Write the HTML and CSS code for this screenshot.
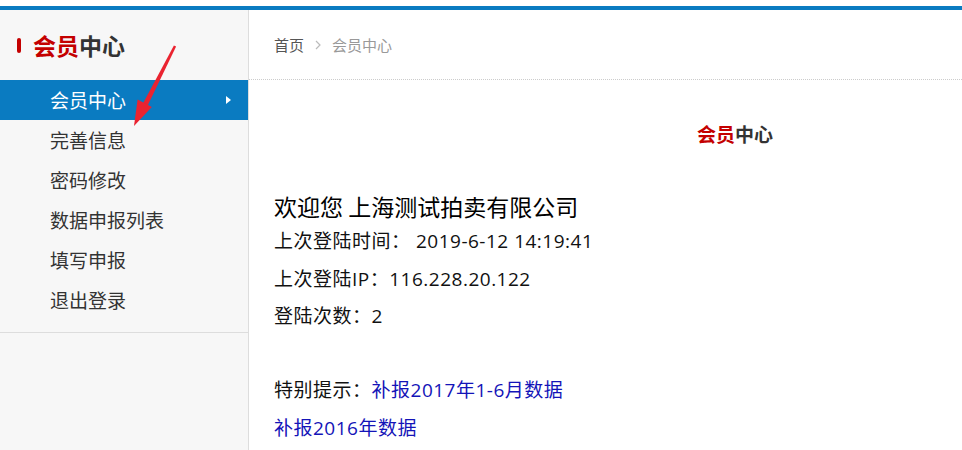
FILE: index.html
```html
<!DOCTYPE html>
<html lang="zh-CN">
<head>
    <meta charset="UTF-8">
    <meta name="viewport" content="width=device-width, initial-scale=1.0">
    <title>会员中心</title>
    <link rel="stylesheet" href="styles.css">
</head>
<body>

    <div class="wrap">
        <!-- 左侧菜单 -->
        <div class="sidebar">
            <h2 class="side-title"><span class="red">会员</span>中心</h2>
            <ul class="menu">
                <li class="active"><a href="#">会员中心</a></li>
                <li><a href="#">完善信息</a></li>
                <li><a href="#">密码修改</a></li>
                <li><a href="#">数据申报列表</a></li>
                <li><a href="#">填写申报</a></li>
                <li><a href="#">退出登录</a></li>
            </ul>
        </div>

        <!-- 右侧内容 -->
        <div class="main">
            <div class="crumb">
                <a href="#">首页</a>
                <svg class="sep" width="6" height="10" viewBox="0 0 6 10"><path d="M1 1 L5 5 L1 9" fill="none" stroke="#bbb" stroke-width="1.2"/></svg>
                <span>会员中心</span>
            </div>

            <div class="content">
                <h3 class="page-title"><span class="red">会员</span>中心</h3>
                <p class="welcome">欢迎您 上海测试拍卖有限公司</p>
                <p class="line">上次登陆时间： 2019-6-12 14:19:41</p>
                <p class="line">上次登陆IP：116.228.20.122</p>
                <p class="line">登陆次数：2</p>

                <div class="notice">
                    <p class="line2">特别提示：<a href="#">补报2017年1-6月数据</a></p>
                    <p class="line2"><a href="#">补报2016年数据</a></p>
                </div>
            </div>
        </div>
    </div>

    <!-- 标注箭头 -->
    <svg class="arrow" width="962" height="450" viewBox="0 0 962 450">
        <polygon points="176.1,46.6 173.9,45.4 143.2,102.9 147.8,105.3" fill="#ea2330"/>
        <polygon points="134,126 137.6,99.6 151.8,106.9" fill="#ea2330"/>
    </svg>

</body>
</html>
```

FILE: styles.css
```css
/* 通用 */
body {
    margin: 0;
    padding-top: 6px;
    font-family: "Noto Sans CJK SC", "Noto Sans", sans-serif;
    color: #111;
    background-color: #fff;
    overflow: hidden;
}

a {
    text-decoration: none;
}

.red {
    color: #c40000;
}

.wrap {
    display: flex;
    border-top: 4px solid #0a7bc1;
    min-height: 440px;
}

/* 左侧菜单 */
.sidebar {
    width: 248px;
    flex-shrink: 0;
    background-color: #f7f7f7;
    border-right: 1px solid #ddd;
}

.side-title {
    display: flex;
    align-items: center;
    height: 70px;
    margin: 0;
    padding-left: 17px;
    font-size: 23px;
    font-weight: bold;
    color: #333;
}

.side-title::before {
    content: "";
    width: 4px;
    height: 15px;
    border-radius: 2px;
    background-color: #c40000;
    margin-right: 12px;
}

.menu {
    list-style: none;
    margin: 0;
    padding: 0 0 12px 0;
    border-bottom: 1px solid #ddd;
}

.menu li a {
    display: block;
    position: relative;
    height: 40px;
    line-height: 40px;
    padding-left: 50px;
    font-size: 19px;
    color: #333;
}

.menu li.active a {
    background-color: #0a7bc1;
    color: #fff;
}

.menu li.active a::after {
    content: "";
    position: absolute;
    left: 226px;
    top: 16px;
    border-left: 5px solid #fff;
    border-top: 4px solid transparent;
    border-bottom: 4px solid transparent;
}

/* 右侧内容 */
.main {
    flex: 1;
}

.crumb {
    display: flex;
    align-items: center;
    gap: 11px;
    height: 69px;
    padding-left: 25px;
    border-bottom: 1px dotted #ccc;
    font-size: 15px;
    color: #999;
}

.crumb a {
    color: #555;
}

.content {
    padding-left: 25px;
}

.page-title {
    margin: 39px 0 0 423px;
    line-height: 30px;
    font-size: 19px;
    font-weight: bold;
    color: #333;
}

.welcome {
    margin: 40px 0 0 0;
    line-height: 34px;
    font-size: 23px;
    color: #000;
}

.line,
.line2 {
    margin: 0;
    font-family: "Open Sans", "Noto Sans CJK SC", sans-serif;
    font-size: 19px;
    letter-spacing: 0.5px;
    color: #111;
}

.line {
    line-height: 37.5px;
}

.line:first-of-type {
    margin-top: 1px;
}

.notice {
    margin-top: 35px;
}

.line2 {
    line-height: 38px;
}

.line2 a {
    color: #1414b8;
}

/* 箭头 */
.arrow {
    position: absolute;
    left: 0;
    top: 0;
    pointer-events: none;
}
```
